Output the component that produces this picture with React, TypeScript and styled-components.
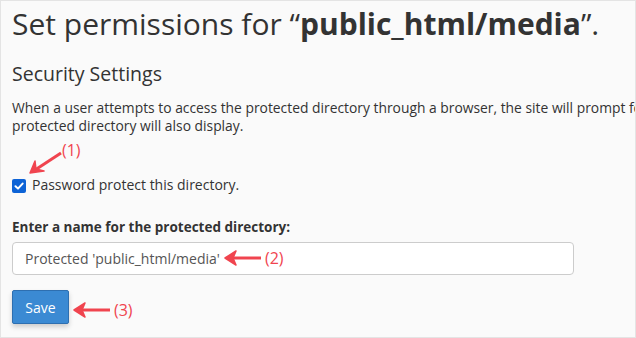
import React from "react";
import styled, { createGlobalStyle } from "styled-components";

const Global = createGlobalStyle`
  html, body { margin: 0; padding: 0; background: #ffffff; }
  body { font-family: "Open Sans", "Liberation Sans", sans-serif; }
`;

const Frame = styled.div`
  position: relative;
  box-sizing: border-box;
  width: 636px;
  height: 338px;
  background: #fafafa;
  border: 1px solid #e4e4e4;
  padding: 0 0 0 11px;
  overflow: hidden;
  color: #333333;
`;

const Title = styled.h1`
  margin: 3px 0 0;
  font-size: 30px;
  line-height: 40px;
  font-weight: 400;
  white-space: nowrap;
  color: #333;
  b { font-weight: 700; }
`;

const SectionTitle = styled.h2`
  margin: 15px 0 0;
  font-size: 19.5px;
  line-height: 30px;
  font-weight: 400;
  color: #333;
`;

const Paragraph = styled.p`
  margin: 10px 0 0;
  font-size: 13.85px;
  line-height: 18px;
  white-space: pre;
  color: #333;
`;

const CheckRow = styled.label`
  display: flex;
  align-items: center;
  gap: 6px;
  margin-top: 40px;
  font-size: 14px;
  line-height: 20px;
  color: #333;
`;

const CheckBox = styled.span`
  display: inline-flex;
  align-items: center;
  justify-content: center;
  width: 14px;
  height: 14px;
  border-radius: 2px;
  background: #0d63d6;
  margin-top: 2px;
`;

const FieldLabel = styled.div`
  margin-top: 22px;
  font-size: 13.5px;
  line-height: 20px;
  font-weight: 700;
  color: #333;
`;

const TextInput = styled.div`
  box-sizing: border-box;
  margin-top: 5px;
  width: 562px;
  height: 33px;
  border: 1px solid #cccccc;
  border-radius: 4px;
  background: #ffffff;
  padding: 0 12px;
  display: flex;
  align-items: center;
  font-size: 14px;
  color: #555555;
`;

const SaveButton = styled.button`
  box-sizing: border-box;
  margin-top: 15px;
  width: 57px;
  height: 34px;
  border: 1px solid #2e6fb0;
  border-radius: 2px;
  background: #3b8ad3;
  color: #ffffff;
  font-family: inherit;
  font-size: 14px;
  padding: 0;
  box-shadow: 0 3px 5px rgba(0, 0, 0, 0.18);
`;

const Note = styled.div<{ x: number; y: number }>`
  position: absolute;
  left: ${(p) => p.x}px;
  top: ${(p) => p.y}px;
  display: flex;
  align-items: center;
  gap: 4px;
  color: #f0444f;
  font-size: 16px;
  line-height: 20px;
`;

const Arrow = styled.svg`
  display: block;
  overflow: visible;
`;

const RED = "#f0444f";

function LeftArrow() {
  return (
    <Arrow width="36" height="16" viewBox="0 0 36 16">
      <line x1="6" y1="8" x2="36" y2="8" stroke={RED} strokeWidth="3" />
      <path d="M0 8 L11 1 L8 8 L11 15 Z" fill={RED} stroke={RED} strokeWidth="1.5" strokeLinejoin="round" />
    </Arrow>
  );
}

export default function App() {
  return (
    <>
      <Global />
      <Frame>
        <Title>
          Set permissions for “<b>public_html/media</b>”.
        </Title>
        <SectionTitle>Security Settings</SectionTitle>
        <Paragraph>
          {"When a user attempts to access the protected directory through a browser, the site will prompt for a username and password. The name of the\nprotected directory will also display."}
        </Paragraph>
        <CheckRow>
          <CheckBox>
            <svg width="10" height="10" viewBox="0 0 10 10">
              <path d="M1.5 5.2 L4 7.6 L8.6 2.6" fill="none" stroke="#fff" strokeWidth="2" strokeLinecap="round" strokeLinejoin="round" />
            </svg>
          </CheckBox>
          Password protect this directory.
        </CheckRow>
        <FieldLabel>Enter a name for the protected directory:</FieldLabel>
        <TextInput>Protected 'public_html/media'</TextInput>
        <SaveButton>Save</SaveButton>

        <Note x={26} y={139}>
          <Arrow width="36" height="36" viewBox="0 0 36 36">
            <line x1="34" y1="13" x2="8" y2="30" stroke={RED} strokeWidth="3" />
            <path d="M3 33 L8 21 L9 29 L17 31 Z" fill={RED} stroke={RED} strokeWidth="1.5" strokeLinejoin="round" />
          </Arrow>
        </Note>
        <Note x={61} y={139}>(1)</Note>
        <Note x={224} y={247}>
          <LeftArrow />
          (2)
        </Note>
        <Note x={73} y={299}>
          <LeftArrow />
          (3)
        </Note>
      </Frame>
    </>
  );
}
